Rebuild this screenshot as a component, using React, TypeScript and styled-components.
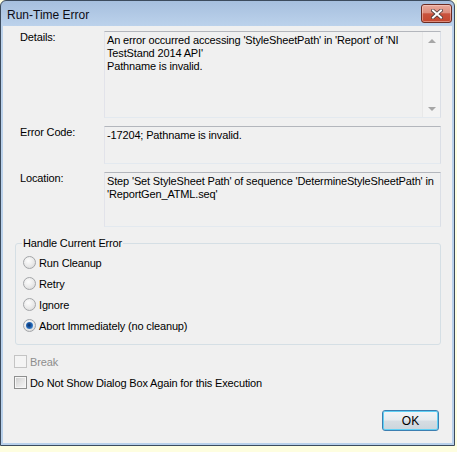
import React from "react";
import styled, { createGlobalStyle } from "styled-components";

const GlobalStyle = createGlobalStyle`
  html, body {
    margin: 0;
    padding: 0;
    background: #fefee0;
  }
  body {
    font-family: "Liberation Sans", Arial, sans-serif;
    font-size: 11px;
    letter-spacing: -0.15px;
    color: #000;
  }
`;

const Window = styled.div`
  width: 455px;
  height: 446px;
  box-sizing: border-box;
  border: 1px solid #3c4b5d;
  border-radius: 6px 6px 0 0;
  background: linear-gradient(to bottom, #a6bfde 0, #bcd2eb 25px, #b8d0ea 100%);
  padding: 0 2px 2px;
  display: flex;
  flex-direction: column;
`;

const TitleBar = styled.div`
  height: 25px;
  flex-shrink: 0;
  display: flex;
  justify-content: space-between;
  align-items: flex-start;
  padding-left: 4px;
`;

const Title = styled.div`
  font-size: 12px;
  letter-spacing: 0;
  line-height: 21px;
  padding-top: 4px;
  color: #0c0c14;
`;

const CloseButton = styled.div`
  width: 31px;
  height: 19px;
  margin-top: 3px;
  box-sizing: border-box;
  border: 1px solid #6b2b22;
  border-radius: 3px;
  background: linear-gradient(to bottom, #e9a99b 0%, #dc8d7d 45%, #c9533e 52%, #c4472f 100%);
  box-shadow: inset 0 0 0 1px rgba(255, 225, 215, 0.45);
  display: flex;
  align-items: center;
  justify-content: center;
`;

const Client = styled.div`
  flex: 1;
  background: #f0f0f0;
  padding: 5px 11px 0 12px;
  display: flex;
  flex-direction: column;
`;

const Fields = styled.div`
  display: grid;
  grid-template-columns: 89px 1fr;
  row-gap: 8px;
`;

const Label = styled.div`
  padding-left: 5px;
  line-height: 13px;
`;

const TextBox = styled.div<{ $h: number }>`
  height: ${p => p.$h}px;
  box-sizing: border-box;
  border: 1px solid;
  border-color: #b3b6bc #dbdfe6 #e3e9ef #e2e3ea;
  background: #f0f0f0;
  display: flex;
`;

const BoxText = styled.div`
  flex: 1;
  padding: 2px 2px;
  line-height: 13px;
  white-space: nowrap;
`;

const ScrollBar = styled.div`
  width: 17px;
  background: #f3f3f3;
  border-left: 1px solid #e8e8e8;
  display: flex;
  flex-direction: column;
  justify-content: space-between;
`;

const ArrowBtn = styled.div<{ $down?: boolean }>`
  height: 17px;
  display: flex;
  align-items: center;
  justify-content: center;
  &::after {
    content: "";
    width: 0;
    height: 0;
    border-left: 4px solid transparent;
    border-right: 4px solid transparent;
    ${p => (p.$down ? "border-top: 4px solid #a6a6a6;" : "border-bottom: 4px solid #a6a6a6;")}
  }
`;

const Group = styled.fieldset`
  margin: 10px 0 0;
  padding: 2px 0 8px 7px;
  border: 1px solid #d5dfe5;
  border-radius: 3px;
`;

const Legend = styled.legend`
  padding: 0 1px;
  margin-left: -1px;
  line-height: 13px;
`;

const OptionRow = styled.div<{ $muted?: boolean }>`
  height: 21px;
  display: flex;
  align-items: center;
  gap: 3px;
  color: ${p => (p.$muted ? "#8d8d8d" : "#000")};
`;

const Radio = styled.span<{ $checked?: boolean }>`
  width: 13px;
  height: 13px;
  box-sizing: border-box;
  border-radius: 50%;
  border: 1px solid #a3a5a8;
  background: radial-gradient(circle at 40% 35%, #fdfdfd 0, #ebebeb 50%, #d3d3d3 100%);
  display: flex;
  align-items: center;
  justify-content: center;
  &::after {
    content: "";
    display: ${p => (p.$checked ? "block" : "none")};
    width: 7px;
    height: 7px;
    border-radius: 50%;
    background: radial-gradient(circle at 45% 45%, #0d2c5e 0, #1e5fae 45%, #66aeea 100%);
  }
`;

const Checks = styled.div`
  margin: 6px 0 0 -1px;
`;

const Check = styled.span<{ $disabled?: boolean }>`
  width: 13px;
  height: 13px;
  box-sizing: border-box;
  border: 1px solid ${p => (p.$disabled ? "#c4c4c4" : "#8e8f8f")};
  background: ${p =>
    p.$disabled ? "#f4f4f4" : "linear-gradient(135deg, #cbcbcb 0%, #e4e4e4 50%, #f7f7f7 100%)"};
  box-shadow: ${p => (p.$disabled ? "none" : "inset 0 0 0 1px #f6f6f6")};
`;

const Footer = styled.div`
  margin-top: 17px;
  padding-right: 2px;
  display: flex;
  justify-content: flex-end;
`;

const OkButton = styled.div`
  width: 57px;
  height: 21px;
  box-sizing: border-box;
  border: 1px solid #3c7fb1;
  border-radius: 3px;
  background: linear-gradient(to bottom, #f3f5f7 0%, #e7ecef 48%, #d6dde3 52%, #cbd5dc 100%);
  box-shadow: inset 0 0 0 1px #5fd0f5;
  display: flex;
  align-items: center;
  justify-content: center;
  font-size: 12px;
  letter-spacing: 0;
`;

const CloseGlyph = () => (
  <svg width="12" height="10" viewBox="0 0 12 10">
    <path d="M2 1.5 L10 8.5 M10 1.5 L2 8.5" stroke="#4a3a3a" strokeWidth="3.6" strokeLinecap="square" />
    <path d="M2 1.5 L10 8.5 M10 1.5 L2 8.5" stroke="#ffffff" strokeWidth="2" strokeLinecap="square" />
  </svg>
);

const radios = ["Run Cleanup", "Retry", "Ignore", "Abort Immediately (no cleanup)"];

export default function App() {
  return (
    <>
      <GlobalStyle />
      <Window>
        <TitleBar>
          <Title>Run-Time Error</Title>
          <CloseButton>
            <CloseGlyph />
          </CloseButton>
        </TitleBar>
        <Client>
          <Fields>
            <Label>Details:</Label>
            <TextBox $h={87}>
              <BoxText>
                An error occurred accessing 'StyleSheetPath' in 'Report' of 'NI
                <br />
                TestStand 2014 API'
                <br />
                Pathname is invalid.
              </BoxText>
              <ScrollBar>
                <ArrowBtn />
                <ArrowBtn $down />
              </ScrollBar>
            </TextBox>

            <Label>Error Code:</Label>
            <TextBox $h={38}>
              <BoxText>-17204; Pathname is invalid.</BoxText>
            </TextBox>

            <Label>Location:</Label>
            <TextBox $h={55}>
              <BoxText>
                Step 'Set StyleSheet Path' of sequence 'DetermineStyleSheetPath' in
                <br />
                'ReportGen_ATML.seq'
              </BoxText>
            </TextBox>
          </Fields>

          <Group>
            <Legend>Handle Current Error</Legend>
            {radios.map((r, i) => (
              <OptionRow key={r}>
                <Radio $checked={i === radios.length - 1} />
                {r}
              </OptionRow>
            ))}
          </Group>

          <Checks>
            <OptionRow $muted>
              <Check $disabled />
              Break
            </OptionRow>
            <OptionRow>
              <Check />
              Do Not Show Dialog Box Again for this Execution
            </OptionRow>
          </Checks>

          <Footer>
            <OkButton>OK</OkButton>
          </Footer>
        </Client>
      </Window>
    </>
  );
}
